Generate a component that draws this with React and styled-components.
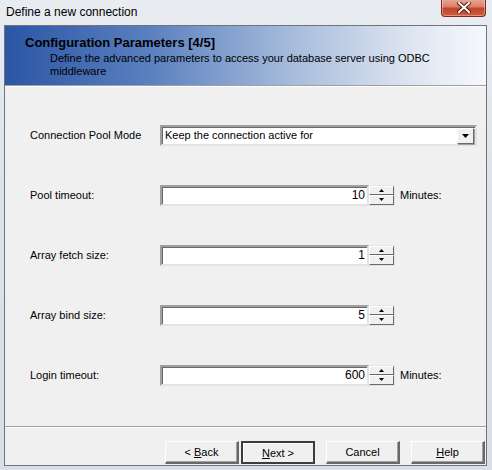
import React from "react";
import styled, { createGlobalStyle } from "styled-components";

const GlobalStyle = createGlobalStyle`
    html, body {
        margin: 0;
        padding: 0;
        background: #dfe4ea;
    }
    * { box-sizing: border-box; }
`;

const FIELDS = [
    { label: "Pool timeout:", value: "10", unit: "Minutes:" },
    { label: "Array fetch size:", value: "1" },
    { label: "Array bind size:", value: "5" },
    { label: "Login timeout:", value: "600", unit: "Minutes:" },
];

const App = () => {
    return (
        <>
            <GlobalStyle />
            <Window>
                <TitleBar>
                    <Title>Define a new connection</Title>
                    <CloseButton>
                        <svg width="14" height="11" viewBox="0 0 14 11">
                            <path
                                d="M2 1 L12 10 M12 1 L2 10"
                                stroke="#5a1a12"
                                strokeWidth="4"
                                strokeLinecap="square"
                            />
                            <path
                                d="M2 1 L12 10 M12 1 L2 10"
                                stroke="#ffffff"
                                strokeWidth="2"
                                strokeLinecap="square"
                            />
                        </svg>
                    </CloseButton>
                </TitleBar>

                <Client>
                    <Header>
                        <HeaderTitle>Configuration Parameters [4/5]</HeaderTitle>
                        <HeaderText>
                            Define the advanced parameters to access your database server using ODBC middleware
                        </HeaderText>
                    </Header>
                    <Etched />

                    <Form>
                        <Label>Connection Pool Mode</Label>
                        <Select>
                            <SelectText>Keep the connection active for</SelectText>
                            <DropButton>
                                <svg width="7" height="4" viewBox="0 0 7 4">
                                    <path d="M0 0 H7 L3.5 4 Z" fill="#000" />
                                </svg>
                            </DropButton>
                        </Select>

                        {FIELDS.map((f) => (
                            <React.Fragment key={f.label}>
                                <Label>{f.label}</Label>
                                <Control>
                                    <NumberBox>{f.value}</NumberBox>
                                    <Spinner>
                                        <SpinButton>
                                            <svg width="5" height="3" viewBox="0 0 5 3">
                                                <path d="M2.5 0 L5 3 H0 Z" fill="#000" />
                                            </svg>
                                        </SpinButton>
                                        <SpinButton>
                                            <svg width="5" height="3" viewBox="0 0 5 3">
                                                <path d="M0 0 H5 L2.5 3 Z" fill="#000" />
                                            </svg>
                                        </SpinButton>
                                    </Spinner>
                                    {f.unit && <Unit>{f.unit}</Unit>}
                                </Control>
                            </React.Fragment>
                        ))}
                    </Form>

                    <Etched />

                    <ButtonRow>
                        <Button>
                            &lt; <u>B</u>ack
                        </Button>
                        <Button $default>
                            <u>N</u>ext &gt;
                        </Button>
                        <Button $gap>Cancel</Button>
                        <Button $gap>
                            <u>H</u>elp
                        </Button>
                    </ButtonRow>
                </Client>
            </Window>
        </>
    );
};

export default App;

const Window = styled.div`
    width: 492px;
    height: 470px;
    display: flex;
    flex-direction: column;
    background: linear-gradient(180deg, #e9edf2 0%, #dde3ea 40%, #d9dfe6 100%);
    font-family: "Liberation Sans", Arial, sans-serif;
    font-size: 11px;
    color: #000;
    overflow: hidden;
`;

const TitleBar = styled.div`
    height: 25px;
    flex: none;
    display: flex;
    align-items: flex-start;
    justify-content: space-between;
    padding-left: 6px;
    padding-right: 6px;
`;

const Title = styled.div`
    font-size: 12px;
    line-height: 12px;
    padding-top: 6px;
    color: #000;
`;

const CloseButton = styled.div`
    width: 45px;
    height: 18px;
    margin-top: -1px;
    display: flex;
    align-items: center;
    justify-content: center;
    border: 1px solid #7d2a1c;
    border-top: none;
    border-radius: 0 0 4px 4px;
    background: linear-gradient(180deg, #e9a996 0%, #d9816b 45%, #c2442c 55%, #cf5a3e 100%);
    box-shadow: inset 0 0 0 1px rgba(255, 255, 255, 0.35);
`;

const Client = styled.div`
    flex: 1;
    margin: 0 5px 4px 4px;
    display: flex;
    flex-direction: column;
    background: #f0f0f0;
    border: 1px solid #6f7479;
`;

const Header = styled.div`
    height: 59px;
    flex: none;
    padding: 10px 40px 0 20px;
    background: linear-gradient(90deg, #2b56a5 0%, #5b80bf 30%, #a7bcdc 60%, #dfe6f2 85%, #f6f8fc 100%);
`;

const HeaderTitle = styled.div`
    font-weight: bold;
    font-size: 13px;
    line-height: 14px;
`;

const HeaderText = styled.div`
    padding-left: 25px;
    line-height: 13px;
    margin-top: 2px;
    max-width: 440px;
`;

const Etched = styled.div`
    height: 2px;
    flex: none;
    border-top: 1px solid #a0a0a0;
    border-bottom: 1px solid #ffffff;
`;

const Form = styled.div`
    flex: 1;
    display: grid;
    grid-template-columns: 130px 1fr;
    grid-auto-rows: 22px;
    row-gap: 38px;
    align-items: center;
    padding: 37px 9px 0 25px;
`;

const Label = styled.div`
    white-space: nowrap;
`;

const sunken = `
    border-style: solid;
    border-width: 2px;
    border-color: #a0a0a0 #e3e3e3 #e3e3e3 #a0a0a0;
    box-shadow: inset 1px 1px 0 #696969;
    background: #ffffff;
`;

const Select = styled.div`
    ${sunken}
    height: 21px;
    display: flex;
    align-items: center;
    padding-left: 3px;
    padding-right: 1px;
`;

const SelectText = styled.div`
    flex: 1;
`;

const DropButton = styled.div`
    width: 17px;
    height: 16px;
    margin-top: 1px;
    display: flex;
    align-items: center;
    justify-content: center;
    background: #f0f0f0;
    border-style: solid;
    border-width: 1px;
    border-color: #ffffff #696969 #696969 #ffffff;
    box-shadow: 1px 1px 0 #a0a0a0;
`;

const Control = styled.div`
    display: flex;
    align-items: center;
    height: 22px;
`;

const NumberBox = styled.div`
    ${sunken}
    width: 209px;
    height: 21px;
    line-height: 17px;
    text-align: right;
    padding-right: 2px;
    font-size: 12px;
`;

const Spinner = styled.div`
    width: 26px;
    height: 21px;
    display: flex;
    flex-direction: column;
    border: 1px solid #e3e3e3;
    border-left: none;
    background: #f0f0f0;
`;

const SpinButton = styled.div`
    flex: 1;
    display: flex;
    align-items: center;
    justify-content: center;
    background: #f0f0f0;
    border-style: solid;
    border-width: 1px;
    border-color: #ffffff #696969 #696969 #ffffff;
`;

const Unit = styled.div`
    margin-left: 5px;
`;

const ButtonRow = styled.div`
    flex: none;
    display: flex;
    justify-content: flex-end;
    gap: 2px;
    padding: 13px 1px 1px 0;
`;

const Button = styled.button`
    width: 74px;
    height: 23px;
    margin-left: ${(p) => (p.$gap ? "9px" : "0")};
    font-family: inherit;
    font-size: 11px;
    color: #000;
    background: #f0f0f0;
    border-style: solid;
    border-width: ${(p) => (p.$default ? "2px" : "1px 2px 2px 1px")};
    border-color: ${(p) =>
        p.$default ? "#3c3c3c" : "#ffffff #696969 #696969 #ffffff"};
    box-shadow: ${(p) => (p.$default ? "inset 1px 1px 0 #fff" : "inset -1px -1px 0 #a0a0a0")};
    padding: 0;
    & u {
        text-decoration: underline;
    }
`;
